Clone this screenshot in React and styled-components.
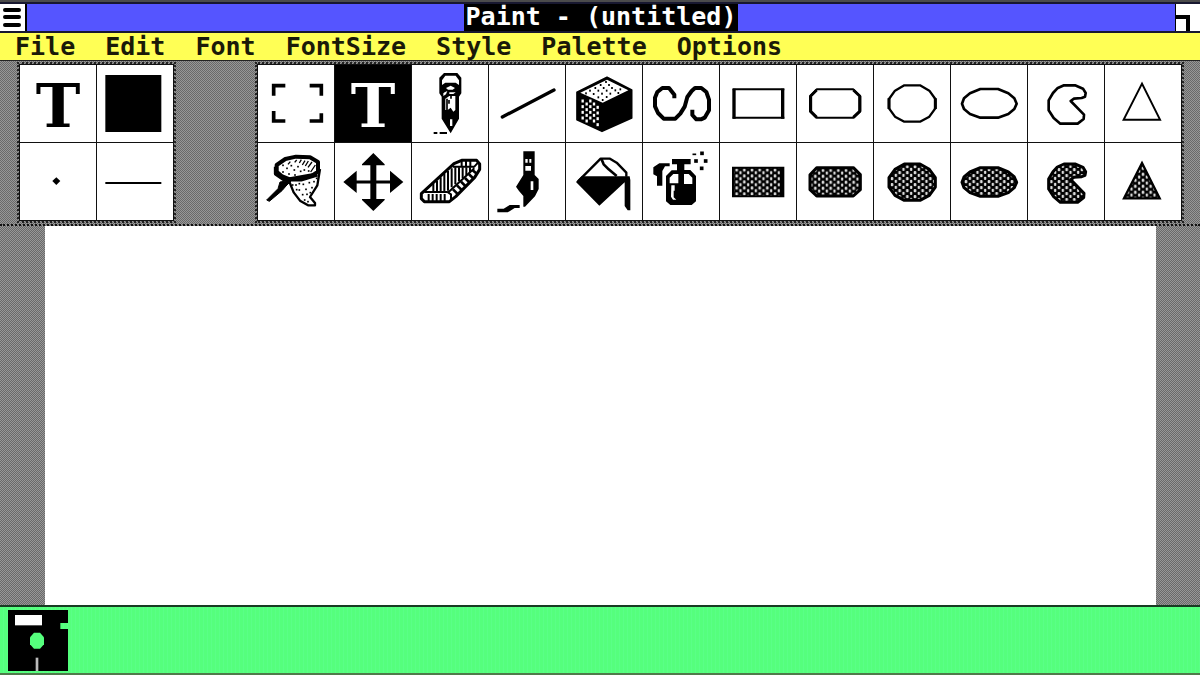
import React, { useState } from "react";
import styled, { createGlobalStyle, css } from "styled-components";

const GlobalStyle = createGlobalStyle`
  * { box-sizing: border-box; }
  body { margin: 0; background: #000; }
  button { margin: 0; padding: 0; border: 0; border-radius: 0; font: inherit; color: inherit; background: none; cursor: pointer; }
`;

const dither = css`
  background: repeating-conic-gradient(#696969 0 25%, #979797 0 50%) 0 0 / 2px 2px;
`;

const Window = styled.div`
  min-height: 100vh;
  display: flex;
  flex-direction: column;
  border-top: 2px solid #4b4b4b;
  font: bold 25px/27px "DejaVu Sans Mono", "Liberation Mono", monospace;
  color: #1a1a08;
`;

const TitleBar = styled.header`
  display: flex;
  height: 31px;
  border: solid #181830;
  border-width: 2px 0;
  background: #5555ff;
`;

const TitleSpace = styled.div`
  flex: 1;
  display: flex;
  justify-content: center;
`;

const Title = styled.h1`
  margin: 0;
  padding: 0 2px;
  font: inherit;
  line-height: 25px;
  color: #fff;
  background: #000;
`;

const BoxButton = styled.button`
  width: ${(p) => (p.$side === "left" ? 27 : 25)}px;
  background: #fff;
  border: solid #000;
  border-width: ${(p) => (p.$side === "left" ? "0 2px 0 0" : "0 0 0 1px")};
  svg { display: block; }
`;

const MenuBar = styled.nav`
  display: flex;
  gap: 30px;
  height: 28px;
  padding-left: 15px;
  background: #ffff55;
  border-bottom: 1px solid #222;
`;

const MenuItem = styled.button`
  line-height: 27px;
`;

const ToolBar = styled.section`
  ${dither}
  display: flex;
  justify-content: space-between;
  padding: 0 15px 0 16px;
  border-bottom: 2px dotted #111;
`;

const Palette = styled.div`
  display: grid;
  grid-template-columns: repeat(${(p) => p.$columns}, 76px);
  grid-auto-rows: 77px;
  gap: 1px;
  background: #111;
  padding: 1px;
  outline: 2px dotted #222;
  margin: 3px;
`;

const Tool = styled.button`
  display: grid;
  place-items: center;
  background: ${(p) => (p.$active ? "#000" : "#fff")};
  color: ${(p) => (p.$active ? "#fff" : "#000")};
  svg { display: block; width: 76px; height: 77px; }
`;

const Letter = styled.span`
  padding-top: 6px;
  font: bold 60px/71px "DejaVu Serif", "Liberation Serif", serif;
`;

const Workspace = styled.main`
  ${dither}
  flex: 1;
  display: flex;
  padding: 0 44px 0 45px;
`;

const Canvas = styled.div`
  flex: 1;
  background: #fff;
`;

const Tray = styled.footer`
  display: flex;
  height: 70px;
  padding: 3px 8px;
  border: solid #173b22;
  border-width: 2px 0;
  border-bottom-color: #4f7a4a;
  background: repeating-linear-gradient(90deg, #55ff7d 0 3px, #5aff87 3px 4px);
`;

const DiskButton = styled.button`
  width: 60px;
  height: 61px;
  svg { display: block; }
`;

const Icon = ({ box, children }) => (
  <svg viewBox={`${box} 228 231`} fill="none" stroke="currentColor" strokeWidth="7" strokeLinejoin="round" aria-hidden="true">
    {children}
  </svg>
);

const Dots = ({ points, fill = "currentColor", w = 5, h = 6 }) => (
  <g fill={fill} stroke="none">
    {points.map(([x, y]) => (
      <rect key={`${x}-${y}`} x={x - w / 2} y={y - h / 2} width={w} height={h} />
    ))}
  </g>
);

const Weave = ({ id, x, y }) => (
  <defs>
    <pattern id={id} x={x} y={y} width="23" height="18" patternUnits="userSpaceOnUse">
      <rect width="23" height="18" fill="#000" stroke="none" />
      <g fill="#dcdcdc" stroke="none">
        <rect x="2" y="0" width="8" height="10" rx="3" />
        <rect x="14" y="8" width="7" height="10" rx="3" />
      </g>
    </pattern>
  </defs>
);

const roundedBox = "M302 88H412L433 109V154L412 173H302L282 154V109Z";
const circle = "M565 76H612L640 92L658 117V145L640 170L612 185H565L537 170L519 145V117L537 92Z";
const oval = "M121 267H174L205 280L223 295L230 311L223 327L205 342L174 353H121L90 342L72 327L66 311L72 295L90 280Z";
const pie = "M372 256H405L429 266L437 279L435 290L425 294L402 296L392 303L432 344L431 357L413 371H361L341 354L326 331V301L339 279L352 265Z";

const tools = [
  ["Select", <Icon box="6 15"><path d="M53 107V77H88M161 77H196V107M53 153V183H88M161 183H196V160" strokeWidth="11" strokeLinejoin="miter" /></Icon>],
  ["Text", <Letter>T</Letter>],
  ["Pencil", (
    <Icon box="468 15">
      <path d="M564 39H604L616 53V100L609 110V176L584 220L557 176V110L550 100V53Z" fill="currentColor" stroke="none" />
      <path d="M568 47H599L609 61V75L599 68H568L558 75V61ZM570 84L584 77L597 84L590 89H576ZM566 97L574 93L570 103L562 108V100ZM580 97H599L592 102H580ZM568 116L580 108H598V150L592 155L584 143L575 150H568ZM582 178H589V198H582Z" fill="#fff" stroke="none" />
      <path d="M573 116V152M579 120V131M585 108V116" strokeWidth="5" />
      <path d="M533 219H544M551 219H573" strokeWidth="6" />
    </Icon>
  )],
  ["Line", <Icon box="9 15"><path d="M49 171L204 90" strokeWidth="10" strokeLinecap="round" /></Icon>],
  ["Block", (
    <Icon box="240 15">
      <path d="M273 97L363 52L437 90V174L348 214L273 179Z" fill="currentColor" strokeWidth="5" />
      <path d="M283 98L363 59L427 91L350 128Z" fill="#fff" stroke="none" />
      <Dots points={[[360, 66], [344, 75], [369, 75], [328, 84], [353, 84], [378, 84], [312, 92], [337, 92], [362, 92], [388, 91], [403, 88], [300, 100], [323, 102], [348, 101], [373, 101], [397, 99], [337, 112], [362, 111], [350, 120]]} />
      <Dots fill="#fff" w={7} h={9} points={[[290, 123], [290, 140], [290, 157], [290, 174], [302, 132], [302, 149], [302, 166], [302, 183], [313, 123], [313, 140], [313, 157], [313, 174], [324, 132], [324, 149], [324, 166], [324, 183], [335, 142], [335, 159], [335, 176], [335, 194]]} />
    </Icon>
  )],
  ["Curve", <Icon box="471 15"><path d="M565 115V104L549 84H529L514 96L507 113V139L516 159L533 176H568L583 161L596 140L604 111L617 93L627 84H646L661 96L669 119V151L656 173L645 178H631L619 165V149" strokeWidth="12" /></Icon>],
  ["Rectangle", <Icon box="12 15"><path d="M50 88H205M50 173H205" strokeWidth="6" /><path d="M54 86V176M200 86V176" strokeWidth="10" /></Icon>],
  ["Rounded rectangle", <Icon box="243 15"><path d={roundedBox} strokeWidth="6" /><path d="M302 90L284 108V154L302 172M412 90L431 108V154L412 172" strokeWidth="9" /></Icon>],
  ["Circle", <Icon box="474 15"><path d={circle} strokeWidth="7" /><path d="M519 115V147M658 115V147" strokeWidth="9" /></Icon>],
  ["Ellipse", <Icon box="33 195"><path d={oval} strokeWidth="8" /></Icon>],
  ["Pie", <Icon box="264 195"><path d={pie} strokeWidth="8" /></Icon>],
  ["Triangle", <Icon box="495 195"><path d="M606 251L660 359H551Z" strokeWidth="6" strokeLinejoin="miter" /></Icon>],
  ["Net", (
    <Icon box="6 249">
      <path d="M98 360L113 397L132 422L156 436H177V429L162 411L184 376L192 327" fill="#fff" strokeWidth="7" />
      <path d="M88 297L120 290L162 292L186 306V335L169 346L101 358L77 348L62 335V315Z" fill="#fff" strokeWidth="12" />
      <path d="M60 320V341L84 358L135 358L184 343" strokeWidth="13" />
      <path d="M32 420L66 386L72 366L108 360L90 378L78 392L40 424Z" fill="currentColor" strokeWidth="3" />
      <path d="M103 305L96 313M122 300L116 307M136 299L130 309M147 302L139 315M157 303L148 318M168 306L156 322M178 315L164 336" strokeWidth="4" />
      <Dots w={5} h={5} points={[[81, 316], [93, 325], [81, 336], [106, 317], [115, 330], [99, 342], [126, 320], [134, 334], [117, 345], [145, 330], [158, 333], [120, 375], [130, 390], [142, 373], [150, 388], [160, 368], [168, 383], [174, 365], [182, 355], [140, 404], [153, 403], [163, 398], [146, 420], [156, 425], [130, 371], [110, 375], [122, 389]]} />
    </Icon>
  )],
  ["Move", (
    <Icon box="237 249">
      <path d="M352 300V430" strokeWidth="18" />
      <path d="M290 366H415" strokeWidth="9" />
      <path d="M352 279L386 313V316H318V313ZM352 453L386 420V417H318V420ZM262 366L302 332V399ZM442 366L402 332V399Z" fill="currentColor" stroke="none" />
    </Icon>
  )],
  ["Eraser", (
    <Icon box="468 249">
      <path d="M496 401L594 311L617 301H662L671 312V328L656 352L599 410L580 425H505L496 416Z" fill="#fff" strokeWidth="9" />
      <path d="M505 396H574L585 403V422M578 396L655 325M590 320H655L666 308" strokeWidth="6" />
      <path d="M532 371V394M543 362V394M554 352V394M565 342V394M576 333V392M587 325V382M598 322V373M609 322V364M620 322V354M631 322V345M642 322V336M518 402V424M530 402V424M542 402V424M554 402V424M566 402V424M617 303V318M630 303V318M643 303V318" strokeWidth="6" />
      <path d="M591 388L604 401M603 376L616 389M615 365L628 378M627 354L640 367M639 343L653 356M650 331L664 343" strokeWidth="8" />
    </Icon>
  )],
  ["Brush", (
    <Icon box="9 249">
      <path d="M112 274H146V345L158 357V387L147 409L117 440H112V408L99 393L90 380L99 366L112 345Z" fill="currentColor" stroke="none" />
      <path d="M118 318H135V332H118ZM118 297H125V308H118ZM130 297H136V308H130ZM134 364H142V390H134Z" fill="#fff" stroke="none" />
      <path d="M34 446H53L71 435H101V444H86L65 457H34Z" fill="currentColor" stroke="none" />
    </Icon>
  )],
  ["Fill", (
    <Icon box="240 249">
      <path d="M276 364L344 296H372L392 308L421 338V350" strokeWidth="7" />
      <path d="M270 366L287 349H431L433 360V451H425L416 438V367L340 437Z" fill="currentColor" stroke="none" />
      <path d="M346 296L353 313L368 328L392 348" strokeWidth="8" />
    </Icon>
  )],
  ["Spray", (
    <Icon box="471 249">
      <path d="M558 297H614V313H595V330H613L630 348V424L617 435H553L540 424V348L557 331H573V313H558ZM520 310H551V319H537L529 333V377H513V349L502 343V322Z" fill="currentColor" stroke="none" />
      <path d="M562 342H577V370H551V353ZM594 342H608L619 353V372H594ZM556 376H566V392H563V412L571 419H561L555 410Z" fill="#fff" stroke="none" />
      <Dots w={11} h={11} points={[[648, 280], [630, 303], [659, 303], [647, 325]]} />
      <Dots w={11} h={5} points={[[625, 283]]} />
    </Icon>
  )],
  ["Filled rectangle", <Icon box="12 249"><Weave id="wRect" x="56" y="325" /><path d="M51 323H202V409H51Z" fill="url(#wRect)" strokeWidth="6" strokeLinejoin="miter" /><path d="M198 322V410" strokeWidth="12" /></Icon>],
  ["Filled rounded rectangle", <Icon box="243 249"><Weave id="wRound" x="292" y="325" /><path d={roundedBox} transform="translate(0 235)" fill="url(#wRound)" strokeWidth="9" /></Icon>],
  ["Filled circle", <Icon box="474 249"><Weave id="wCircle" x="522" y="313" /><path d={circle} transform="translate(0 236)" fill="url(#wCircle)" strokeWidth="9" /></Icon>],
  ["Filled ellipse", <Icon box="33 429"><Weave id="wOval" x="72" y="502" /><path d={oval} transform="translate(0 236)" fill="url(#wOval)" strokeWidth="9" /></Icon>],
  ["Filled pie", <Icon box="264 429"><Weave id="wPie" x="328" y="502" /><path d={pie} transform="translate(0 236)" fill="url(#wPie)" strokeWidth="9" /></Icon>],
  ["Filled triangle", <Icon box="495 429"><Weave id="wTri" x="557" y="500" /><path d="M606 489L659 595H552Z" fill="url(#wTri)" strokeWidth="7" strokeLinejoin="miter" /></Icon>],
];

const settings = [
  ["Current tool", <Letter>T</Letter>],
  ["Current pattern", <Icon box="291 27"><path d="M316 57H484V228H316Z" fill="currentColor" stroke="none" /></Icon>],
  ["Brush shape", <Icon box="60 261"><path d="M169 364L181 375L169 387L157 375Z" fill="currentColor" stroke="none" /></Icon>],
  ["Line width", <Icon box="291 261"><path d="M316 381H484" strokeWidth="6" /></Icon>],
];

const menus = ["File", "Edit", "Font", "FontSize", "Style", "Palette", "Options"];

export default function App() {
  const [active, setActive] = useState("Text");
  return (
    <Window>
      <GlobalStyle />
      <TitleBar>
        <BoxButton $side="left" aria-label="System menu">
          <svg width="25" height="27" viewBox="0 0 25 27" stroke="#000" strokeWidth="4" strokeLinecap="round">
            <path d="M5 6H19M5 13H19M5 21H19" />
          </svg>
        </BoxButton>
        <TitleSpace>
          <Title>Paint - (untitled)</Title>
        </TitleSpace>
        <BoxButton $side="right" aria-label="Size box">
          <svg width="24" height="27" viewBox="0 0 24 27" fill="none" stroke="#000" strokeWidth="4">
            <path d="M0 13H12V27" />
          </svg>
        </BoxButton>
      </TitleBar>
      <MenuBar>
        {menus.map((name) => <MenuItem key={name}>{name}</MenuItem>)}
      </MenuBar>
      <ToolBar>
        <Palette $columns={2}>
          {settings.map(([name, icon]) => <Tool key={name} aria-label={name}>{icon}</Tool>)}
        </Palette>
        <Palette $columns={12}>
          {tools.map(([name, icon]) => (
            <Tool key={name} aria-label={name} aria-pressed={active === name} $active={active === name} onClick={() => setActive(name)}>
              {icon}
            </Tool>
          ))}
        </Palette>
      </ToolBar>
      <Workspace>
        <Canvas />
      </Workspace>
      <Tray>
        <DiskButton aria-label="Disk">
          <svg width="60" height="61" viewBox="23 60 180 183">
            <path d="M23 60H203V99H180V117H203V243H23Z" fill="#000" />
            <path d="M44 75H125V106H44Z" fill="#fff" />
            <path d="M101 128H119L131 142V163L119 176H101L89 163V142Z" fill="#55ff7d" />
            <path d="M106 203H114V243H106Z" fill="#bbb" />
          </svg>
        </DiskButton>
      </Tray>
    </Window>
  );
}
